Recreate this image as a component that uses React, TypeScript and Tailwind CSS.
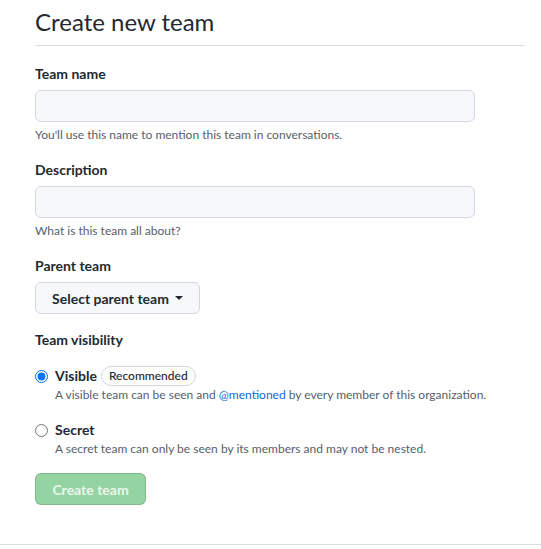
import React from "react";

function Caret() {
  return (
    <svg width="8" height="4" viewBox="0 0 8 4" className="ml-1.5 inline-block">
      <path d="M0 0h8L4 4z" fill="#24292f" />
    </svg>
  );
}

export default function App() {
  return (
    <div
      className="min-h-[549px] bg-white text-[#24292f]"
      style={{ fontFamily: '"Lato", "Noto Sans", sans-serif' }}
    >
      <div className="border-b border-[#d8dee4] pb-[39px] pl-[35px] pr-[16px] pt-[7px]">
        <h1 className="border-b border-[#d8dee4] pb-2 text-[24px] font-normal leading-[30px]">
          Create new team
        </h1>

        <div className="mt-[18px]">
          <label className="block text-[14px] font-bold leading-5">Team name</label>
          <input
            type="text"
            className="mt-1.5 block h-8 w-[440px] rounded-md border border-[#d0d7de] bg-[#f6f8fa] px-3 text-[14px] outline-none"
          />
          <p className="mt-1 text-[12px] leading-[18px] text-[#57606a]">
            You&apos;ll use this name to mention this team in conversations.
          </p>
        </div>

        <div className="mt-4">
          <label className="block text-[14px] font-bold leading-5">Description</label>
          <input
            type="text"
            className="mt-1.5 block h-8 w-[440px] rounded-md border border-[#d0d7de] bg-[#f6f8fa] px-3 text-[14px] outline-none"
          />
          <p className="mt-1 text-[12px] leading-[18px] text-[#57606a]">
            What is this team all about?
          </p>
        </div>

        <div className="mt-4">
          <label className="block text-[14px] font-bold leading-5">Parent team</label>
          <button className="mt-1.5 flex h-8 w-[165px] items-center justify-center rounded-md border border-[#d0d7de] bg-[#f6f8fa] text-[14px] font-bold">
            Select parent team
            <Caret />
          </button>
        </div>

        <div className="mt-4">
          <p className="text-[14px] font-bold leading-5">Team visibility</p>

          <div className="mt-4 flex gap-[7px]">
            <input
              type="radio"
              name="vis"
              defaultChecked
              className="m-0 mt-[4px] h-[13px] w-[13px] shrink-0 accent-[#0075ff]"
            />
            <div>
              <div className="flex h-5 items-center gap-1">
                <span className="text-[14px] font-bold leading-5">Visible</span>
                <span className="rounded-full border border-[#d0d7de] px-[7px] text-[12px] font-medium leading-[18px] text-[#24292f]">
                  Recommended
                </span>
              </div>
              <p className="text-[12px] leading-[18px] text-[#57606a]">
                A visible team can be seen and{" "}
                <span className="text-[#0969da]">@mentioned</span> by every member of this
                organization.
              </p>
            </div>
          </div>

          <div className="mt-4 flex gap-[7px]">
            <input
              type="radio"
              name="vis"
              className="m-0 mt-[4px] h-[13px] w-[13px] shrink-0"
            />
            <div>
              <div className="h-5 text-[14px] font-bold leading-5">Secret</div>
              <p className="text-[12px] leading-[18px] text-[#57606a]">
                A secret team can only be seen by its members and may not be nested.
              </p>
            </div>
          </div>
        </div>

        <button className="mt-[15px] block h-8 w-[111px] rounded-md border border-[rgba(31,35,40,0.15)] bg-[#94d3a2] text-[14px] font-bold text-white/80">
          Create team
        </button>
      </div>
    </div>
  );
}
